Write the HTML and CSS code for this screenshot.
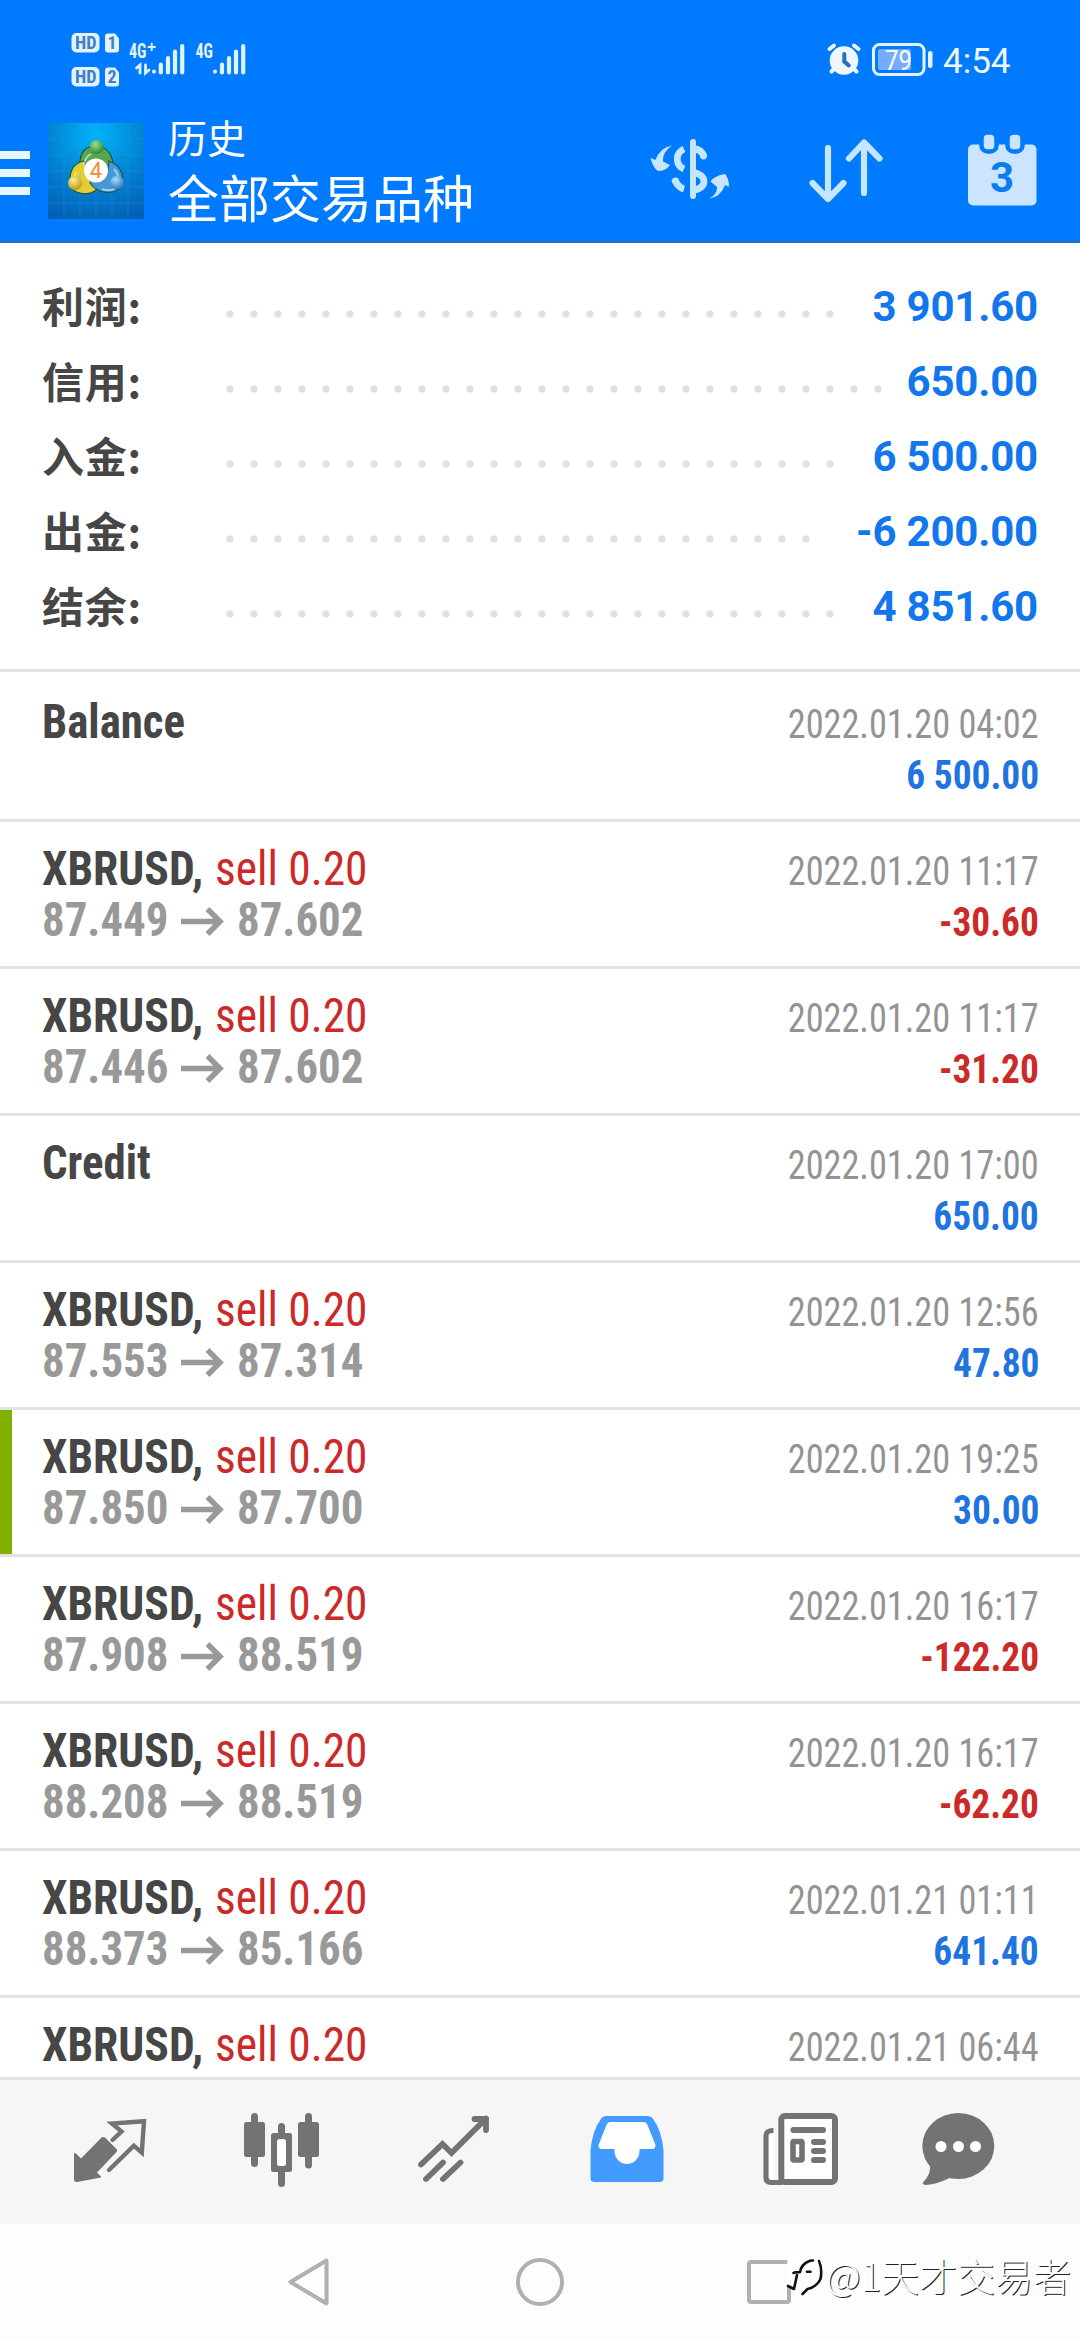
FILE: index.html
```html
<!DOCTYPE html>
<html lang="zh-CN">
<head>
<meta charset="utf-8">
<title>历史</title>
<link rel="stylesheet" href="styles.css">
</head>
<body>
<div class="screen">
  <header class="header">
    <div class="status">
      <svg class="signals" width="190" height="70" viewBox="65 25 190 70">
        <g fill="#e3f3ff">
          <rect x="71.500" y="33" width="28" height="19.500" rx="5"/>
          <rect x="71.500" y="67" width="28" height="19.500" rx="5"/>
          <path d="M108 33.500h7l4 5v11q0 3-3 3h-8q-3 0-3-3v-13q0-3 3-3zM108 67.500h7l4 5v11q0 3-3 3h-8q-3 0-3-3v-13q0-3 3-3z"/>
        </g>
        <g class="badge-text">
          <text x="75" y="49" textLength="21.500" lengthAdjust="spacingAndGlyphs">HD</text>
          <text x="75" y="83" textLength="21.500" lengthAdjust="spacingAndGlyphs">HD</text>
          <text x="107.500" y="49">1</text>
          <text x="107.500" y="83">2</text>
        </g>
        <g class="net-text">
          <text x="129" y="57.500" textLength="17.500" lengthAdjust="spacingAndGlyphs">4G</text>
          <text x="195.500" y="57.500" textLength="17.500" lengthAdjust="spacingAndGlyphs">4G</text>
        </g>
        <g stroke="#dff3ff" stroke-linecap="round" fill="none">
          <path stroke-width="2" d="M148.500 47h6.500M151.700 43.800v6.500"/>
          <path stroke-width="2.800" d="M136.500 68l3.500-3v8M149 70l-3.500 3v-8"/>
          <path stroke-width="4.200" d="M154 71.500v.1M160.800 64.500v8M168 58v14.500M175 51.500v21M182.200 46v26.500M215 71.500v.1M222 64.500v8M229 58v14.500M236 51.500v21M243.200 46v26.500"/>
        </g>
      </svg>
      <div class="status-right">
        <svg width="110" height="44" viewBox="823 38 110 44">
          <circle cx="843" cy="60.500" r="14.300" fill="#f0f8ff"/>
          <g fill="none" stroke="#f0f8ff" stroke-width="4" stroke-linecap="round">
            <path d="M828.500 49l4.500-3.500M857.500 49l-4.500-3.500M830.500 71.500l3-3M855.500 71.500l-3-3"/>
            <path stroke="#2a6fc4" d="M843.300 54v7.500l4.500 4"/>
          </g>
          <rect x="877" y="49" width="33" height="21" rx="2" fill="#74adff"/>
          <rect x="872.500" y="44.500" width="50.500" height="30" rx="6" fill="none" stroke="#e3f3ff" stroke-width="3"/>
          <rect x="927" y="51" width="4.500" height="17" rx="2" fill="#e3f3ff"/>
          <text class="battery" x="884" y="69.500" textLength="27" lengthAdjust="spacingAndGlyphs">79</text>
        </svg>
        <span class="clock">4:54</span>
      </div>
    </div>
    <div class="appbar">
      <div class="burger"><i></i><i></i><i></i></div>
      <svg class="logo" width="96" height="96" viewBox="0 0 96 96">
        <defs>
          <radialGradient id="bg" cx=".5" cy=".12" r=".95"><stop offset="0" stop-color="#02b4fa"/><stop offset=".5" stop-color="#0285d4"/><stop offset="1" stop-color="#0360b6"/></radialGradient>
          <radialGradient id="gr" cx=".4" cy=".3" r=".8"><stop offset="0" stop-color="#9be08d"/><stop offset="1" stop-color="#237a2e"/></radialGradient>
          <radialGradient id="ye" cx=".4" cy=".3" r=".8"><stop offset="0" stop-color="#fff08a"/><stop offset="1" stop-color="#b38d10"/></radialGradient>
          <radialGradient id="bl" cx=".4" cy=".3" r=".8"><stop offset="0" stop-color="#a5dcff"/><stop offset="1" stop-color="#1c69b0"/></radialGradient>
        </defs>
        <rect width="96" height="96" fill="url(#bg)"/>
        <path d="M16 0v96M32 0v96M48 0v96M64 0v96M80 0v96M0 16h96M0 32h96M0 48h96M0 64h96M0 80h96" stroke="#35b1ec" stroke-opacity=".22"/>
        <g stroke="#1c5340" stroke-width="1.200">
          <path d="M32 43C31 29 38 23 48 23s19 9 17 25q-4 9-8 9L36 44z" fill="#55a851"/>
          <path d="M36 38C24 40 21 51 22 61s17 12 25 7l6-9-15-16z" fill="#e1cd34"/>
          <path d="M61 38c13 4 15 16 13 25-5 8-23 10-32-3l3-6 14-3z" fill="#4498d8"/>
        </g>
        <path d="M43 31q-6 3-7 11M28 49q-2 5 0 9M54 66q8 3 14-1M66 46q5 5 4 11" fill="none" stroke="#fff" stroke-opacity=".5" stroke-width="2"/>
        <circle cx="48.500" cy="24" r="7" fill="url(#gr)"/>
        <circle cx="27" cy="60" r="7" fill="url(#ye)"/>
        <circle cx="69" cy="59.500" r="7" fill="url(#bl)"/>
        <circle cx="48" cy="47.500" r="12" fill="#fff"/>
        <text class="logo-digit" x="48" y="55">4</text>
      </svg>
      <div class="titles">
        <div class="title">历史</div>
        <div class="subtitle">全部交易品种</div>
      </div>
      <svg class="actions" width="400" height="84" viewBox="640 127 400 84">
        <g fill="none" stroke="#c4e6ff" stroke-width="6.800">
          <path stroke-linecap="round" stroke-width="6" d="M693 142v54"/>
          <path d="M684 149c-9 4-9 16 0 20M674.500 179q3 8 9.500 10M693 172q11 3 11 9.500t-11 9"/>
          <path d="M693 148.500q9 1 11 8" /><path stroke-linecap="round" d="M703.500 155.500v.5M675.500 181v.1"/>
        </g>
        <path fill="#c4e6ff" d="M672 145.500q-10 7-9 16l7 3.500q-4 6-12 6-5-3-7.500-13l5 2q4-12 16.500-14.500zM708 199c10-4 9-12 9-12l-6.500-5.500q4-6 14.500-7.500 4 4 4 13l-4-2q-4 12-17 14z"/>
        <g fill="none" stroke="#c4e6ff" stroke-width="6.200" stroke-linecap="round" stroke-linejoin="round">
          <path d="M828 148v50M812.500 183l15.500 16 15.500-16M864 193v-50M849 158.500l15-16 15.500 16"/>
        </g>
        <rect x="968" y="144.500" width="68.500" height="61" rx="5" fill="#cbe4ff"/>
        <g fill="#cbe4ff" stroke="#007aff" stroke-width="4.500">
          <rect x="981.500" y="132.500" width="15" height="19" rx="6"/>
          <rect x="1007.500" y="132.500" width="15" height="19" rx="6"/>
        </g>
        <text class="cal-digit" x="1002" y="192">3</text>
      </svg>
    </div>
  </header>

  <main class="content">
    <section class="summary">
      <div class="sum"><span class="label">利润:</span><span class="dots" style="width:624px"></span><b>3 901.60</b></div>
      <div class="sum"><span class="label">信用:</span><span class="dots" style="width:672px"></span><b>650.00</b></div>
      <div class="sum"><span class="label">入金:</span><span class="dots" style="width:624px"></span><b>6 500.00</b></div>
      <div class="sum"><span class="label">出金:</span><span class="dots" style="width:600px"></span><b>-6 200.00</b></div>
      <div class="sum"><span class="label">结余:</span><span class="dots" style="width:624px"></span><b>4 851.60</b></div>
    </section>
    <section class="deals">
      <div class="deal"><div class="left"><div class="line"><b class="name">Balance</b></div></div><div class="right"><span class="date">2022.01.20 04:02</span><b class="amount">6 500.00</b></div></div>
      <div class="deal"><div class="left"><div class="line"><b class="sym">XBRUSD,</b><span class="side">sell 0.20</span></div><div class="line prices"><b>87.449</b><svg class="arrow" width="43" height="29" viewBox="0 0 43 29"><path d="M0 14.500h39M26.500 2l12.500 12.500L26.500 27"/></svg><b>87.602</b></div></div><div class="right"><span class="date">2022.01.20 11:17</span><b class="amount loss">-30.60</b></div></div>
      <div class="deal"><div class="left"><div class="line"><b class="sym">XBRUSD,</b><span class="side">sell 0.20</span></div><div class="line prices"><b>87.446</b><svg class="arrow" width="43" height="29" viewBox="0 0 43 29"><path d="M0 14.500h39M26.500 2l12.500 12.500L26.500 27"/></svg><b>87.602</b></div></div><div class="right"><span class="date">2022.01.20 11:17</span><b class="amount loss">-31.20</b></div></div>
      <div class="deal"><div class="left"><div class="line"><b class="name">Credit</b></div></div><div class="right"><span class="date">2022.01.20 17:00</span><b class="amount">650.00</b></div></div>
      <div class="deal"><div class="left"><div class="line"><b class="sym">XBRUSD,</b><span class="side">sell 0.20</span></div><div class="line prices"><b>87.553</b><svg class="arrow" width="43" height="29" viewBox="0 0 43 29"><path d="M0 14.500h39M26.500 2l12.500 12.500L26.500 27"/></svg><b>87.314</b></div></div><div class="right"><span class="date">2022.01.20 12:56</span><b class="amount">47.80</b></div></div>
      <div class="deal marked"><div class="left"><div class="line"><b class="sym">XBRUSD,</b><span class="side">sell 0.20</span></div><div class="line prices"><b>87.850</b><svg class="arrow" width="43" height="29" viewBox="0 0 43 29"><path d="M0 14.500h39M26.500 2l12.500 12.500L26.500 27"/></svg><b>87.700</b></div></div><div class="right"><span class="date">2022.01.20 19:25</span><b class="amount">30.00</b></div></div>
      <div class="deal"><div class="left"><div class="line"><b class="sym">XBRUSD,</b><span class="side">sell 0.20</span></div><div class="line prices"><b>87.908</b><svg class="arrow" width="43" height="29" viewBox="0 0 43 29"><path d="M0 14.500h39M26.500 2l12.500 12.500L26.500 27"/></svg><b>88.519</b></div></div><div class="right"><span class="date">2022.01.20 16:17</span><b class="amount loss">-122.20</b></div></div>
      <div class="deal"><div class="left"><div class="line"><b class="sym">XBRUSD,</b><span class="side">sell 0.20</span></div><div class="line prices"><b>88.208</b><svg class="arrow" width="43" height="29" viewBox="0 0 43 29"><path d="M0 14.500h39M26.500 2l12.500 12.500L26.500 27"/></svg><b>88.519</b></div></div><div class="right"><span class="date">2022.01.20 16:17</span><b class="amount loss">-62.20</b></div></div>
      <div class="deal"><div class="left"><div class="line"><b class="sym">XBRUSD,</b><span class="side">sell 0.20</span></div><div class="line prices"><b>88.373</b><svg class="arrow" width="43" height="29" viewBox="0 0 43 29"><path d="M0 14.500h39M26.500 2l12.500 12.500L26.500 27"/></svg><b>85.166</b></div></div><div class="right"><span class="date">2022.01.21 01:11</span><b class="amount">641.40</b></div></div>
      <div class="deal"><div class="left"><div class="line"><b class="sym">XBRUSD,</b><span class="side">sell 0.20</span></div></div><div class="right"><span class="date">2022.01.21 06:44</span></div></div>
    </section>
  </main>

  <nav class="tabs">
    <svg width="108" height="144" viewBox="56 2080 108 144">
      <path fill="#737373" d="M74 2153l2 .5 5 5 21-21.500 3 .500 12 12v2l-20 21 4 4v1l-24 4.500q-3 0-3-2.500z"/>
      <path fill="none" stroke="#737373" stroke-width="4.400" d="M112.500 2140l9-8.500-9.500-8 32-2.300-2.200 31.500-8-7L109 2170" stroke-linecap="round"/>
    </svg>
    <svg width="108" height="144" viewBox="228 2080 108 144">
      <g fill="#737373">
        <rect x="244" y="2122" width="21" height="35" rx="2.500"/><rect x="251" y="2113" width="7" height="54" rx="3.500"/>
        <rect x="298" y="2122" width="21" height="35" rx="2.500"/><rect x="305" y="2113" width="7" height="55.500" rx="3.500"/>
        <rect x="278" y="2123" width="7" height="64" rx="3.500"/><rect x="271" y="2133" width="21" height="39" rx="2.500"/>
      </g>
      <rect x="277" y="2139" width="9" height="27" rx="2.500" fill="#fff"/>
    </svg>
    <svg width="108" height="144" viewBox="400 2080 108 144">
      <g fill="none" stroke="#737373" stroke-width="5.800" stroke-linecap="round">
        <path d="M421 2164.500l21.500-20.500 9 9 34.500-34.500"/><path stroke-linejoin="round" d="M474.500 2119H486v11"/>
        <path d="M443 2162.500l-17 16.500M460.500 2162.500l-17.500 16.500"/>
      </g>
    </svg>
    <svg width="108" height="144" viewBox="571.500 2080 108 144">
      <path fill="#429bff" d="M590 2178v-28q2-20 11-32 2-2 5-2h41q3 0 5 2 9 12 11 32v28q0 4-4 4h-65q-4 0-4-4z"/>
      <path fill="#fff" d="M610 2122h32q4 0 5 3l8 20q0 4-3 4h-13v2a12.500 13 0 0 1-25 0v-2h-13q-3 0-3-4l8-20q1-3 4-3z"/>
    </svg>
    <svg width="108" height="144" viewBox="743.500 2080 108 144">
      <path fill="#fff" d="M766 2133h8v49h-8zM780 2116h54v66h-54z"/>
      <g fill="none" stroke="#737373" stroke-width="6">
        <rect x="780.800" y="2116" width="53.700" height="66" rx="3.500"/>
        <path stroke-width="5.200" d="M773 2130.500q-7.500 0-7.500 5v42q0 5 5 5H782"/>
        <path stroke-linecap="round" d="M793 2130h29.500M813.500 2142h9M813.500 2151h9M813.500 2160h9"/>
        <rect x="792.500" y="2141.500" width="9" height="18.500" rx="1" stroke-width="5.600"/>
      </g>
    </svg>
    <svg width="108" height="144" viewBox="915.500 2080 108 144">
      <ellipse cx="957.800" cy="2146" rx="36" ry="33" fill="#737373"/>
      <path fill="#737373" d="M929 2163q3 10-7 20 1 2 3 2 13-1 25-7.500z"/>
      <g fill="#fff"><circle cx="940.500" cy="2146.500" r="5.500"/><circle cx="958" cy="2146.500" r="5.500"/><circle cx="975" cy="2146.500" r="5.500"/></g>
    </svg>
  </nav>

  <footer class="sysnav">
    <svg width="60" height="60" viewBox="280 2252 60 60"><path d="M326.500 2260.500v43L290.500 2282z"/></svg>
    <svg width="60" height="60" viewBox="510 2252 60 60"><circle cx="540" cy="2282" r="22"/></svg>
    <svg width="60" height="60" viewBox="740 2252 60 60"><rect x="749" y="2262" width="40" height="40" rx="2"/></svg>
    <div class="watermark">
      <svg class="wm-logo" width="40" height="46" viewBox="785 2260 40 46">
        <path class="wm-bg" d="M789 2262h28q7 4 6 16t-9 20l-14 5-6-6q-8-4-7-14z"/>
        <path d="M794.500 2281l2-.8h4.500q1-8 10-11.500l3-.2M808 2279.700h3.500M798 2283l-3 14-6-3M820 2269q3.500 8 1.500 18-4 8-13 10l-5 5"/>
      </svg>
      <span>@1天才交易者</span>
    </div>
  </footer>
</div>
</body>
</html>
```
FILE: styles.css
```css
* { box-sizing: border-box; }
body { margin: 0; background: #fdfdfd; font-family: Roboto, "Noto Sans CJK SC", sans-serif; }
svg { display: block; flex: none; }

.screen { width: 1080px; height: 2340px; display: flex; flex-direction: column; overflow: hidden; }

/* header */
.header { height: 243px; flex: none; background: #007aff; border-bottom: 3px solid #1a72cc; color: #fff; }
.status { height: 120px; padding: 25px 70px 0 65px; display: flex; justify-content: space-between; align-items: flex-start; }
.status-right { display: flex; gap: 9px; padding-top: 13px; }
.clock { width: 67px; padding-top: 1px; font-size: 35px; line-height: 46px; color: #eef8ff; white-space: nowrap; }
.badge-text { font: 700 18px "Roboto Condensed", Roboto, sans-serif; fill: #3f7fcb; }
.net-text { font: 700 20px "Roboto Condensed", Roboto, sans-serif; fill: #e3f3ff; }
.battery { font: 400 27px Roboto, sans-serif; fill: #fff; }

.appbar { height: 120px; display: flex; align-items: flex-start; }
.burger { width: 30px; margin: 31px 18px 0 0; display: grid; gap: 10px; }
.burger i { height: 8px; background: #e8f6ff; }
.logo { margin: 3px 24px 0 0; }
.logo-digit { font: 400 22px Roboto, sans-serif; fill: #f08a3c; text-anchor: middle; }
.titles { width: 472px; }
.title { font-size: 39px; line-height: 40px; }
.subtitle { font-size: 51px; line-height: 60px; margin-top: 11px; }
.actions { margin-top: 7px; }
.cal-digit { font: 700 42px Roboto, sans-serif; fill: #0a7cf0; text-anchor: middle; }

/* account totals */
.content { flex: 1; min-height: 0; overflow: hidden; background: #fff; }
.summary { height: 429px; padding: 25px 42px 0; border-bottom: 3px solid #e2e2e2; }
.sum { height: 75px; display: flex; align-items: center; }
.label { width: 184px; margin-top: -2px; font: 700 42px/72px "Noto Sans CJK SC", sans-serif; letter-spacing: .7px; color: #464646; }
.dots { height: 8px; margin-top: 17px; background: radial-gradient(circle at 4px 4px, #e0e0e0 3.3px, transparent 4px) 0 0 / 24px 8px repeat-x; }
.sum b { margin: 2px 0 0 auto; font-size: 42px; line-height: 75px; letter-spacing: -.2px; color: #1276ec; white-space: nowrap; }

/* history list */
.deals { padding-top: 3px; }
.deal { height: 147px; padding: 21px 41px 0 42px; display: flex; justify-content: space-between; border-bottom: 3px solid #e2e2e2; font-family: "Roboto Condensed", Roboto, sans-serif; white-space: nowrap; }
.marked { background: linear-gradient(#7fb000, #7fb000) left / 12px 100% no-repeat; background-clip: padding-box; }
.line { display: flex; font-size: 48px; line-height: 51px; color: #464646; }
.name, .sym, .side, .prices b { transform-origin: left; }
.name { transform: scaleX(.935); }
.sym { width: 172.5px; transform: scaleX(.95); }
.side { color: #cc2929; transform: scaleX(.946); }
.prices { color: #999; }
.prices b { width: 139px; transform: scaleX(.935); }
.arrow { margin: 13px 13px 0 0; fill: none; stroke: #999; stroke-width: 5.5px; }
.right { padding-top: 3px; display: flex; flex-direction: column; align-items: flex-end; font-size: 40px; line-height: 51px; }
.date, .amount { transform-origin: right; }
.date { color: #939393; transform: scaleX(.907); }
.amount { color: #1f74de; transform: scaleX(.935); }
.loss { color: #cc2929; }

/* bottom bars */
.tabs { height: 147px; flex: none; padding: 0 24px; display: grid; grid-template-columns: repeat(6, 172px); justify-items: center; background: #f6f6f6; border-top: 3px solid #e3e3e3; }
.sysnav { height: 116px; flex: none; position: relative; display: flex; justify-content: center; align-items: center; gap: 170px; background: #fdfdfd; fill: none; stroke: #b0b0b0; stroke-width: 4px; stroke-linejoin: round; }
.watermark { position: absolute; right: 9px; top: 24px; display: flex; align-items: center; gap: 2px; font: 300 38px/54px "Noto Sans CJK SC", sans-serif; color: #fff; text-shadow: 1px 1px 0 #222; white-space: nowrap; }
.wm-logo { stroke: #111; stroke-width: 2.6px; stroke-linecap: round; }
.wm-bg { fill: #fff; stroke: none; }
```
